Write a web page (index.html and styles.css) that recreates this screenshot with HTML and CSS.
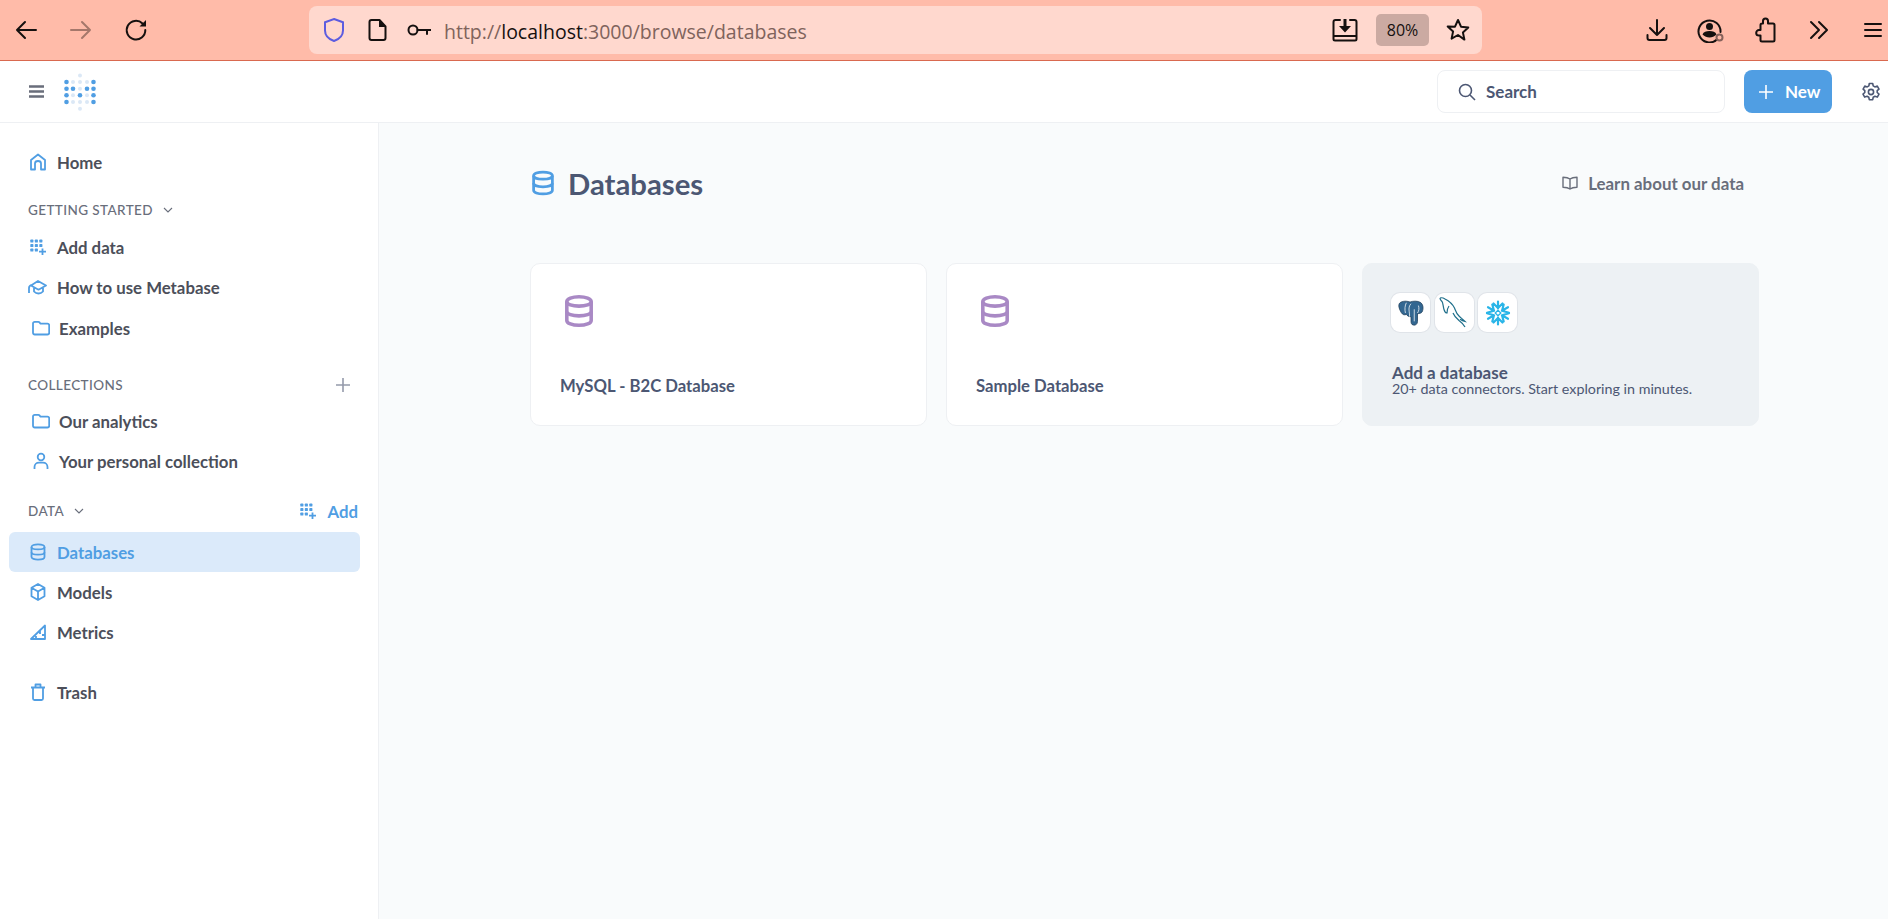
FILE: index.html
```html
<!DOCTYPE html>
<html lang="en">
<head>
    <meta charset="UTF-8">
    <meta name="viewport" content="width=device-width, initial-scale=1.0">
    <title>Databases</title>
    <link rel="stylesheet" href="styles.css">
</head>
<body>

<svg class="sprites" aria-hidden="true">
    <symbol id="i-db" viewBox="0 0 16 18">
        <path d="M1.500 4c0-1.500 2.900-2.600 6.500-2.600s6.500 1.100 6.500 2.600v10c0 1.500-2.900 2.600-6.500 2.600s-6.500-1.100-6.500-2.600z"/>
        <path d="M1.500 4c0 1.400 2.900 2.400 6.500 2.400s6.500-1 6.500-2.400M1.500 9.200c0 1.400 2.900 2.400 6.500 2.400s6.500-1 6.500-2.400"/>
    </symbol>
    <symbol id="i-folder" viewBox="0 0 18 16">
        <path d="M1 3.500c0-1 .7-1.700 1.700-1.700h3.600c.5 0 .9.200 1.200.6l1 1.300h7c1 0 1.700.7 1.700 1.700v7.400c0 1-.7 1.700-1.700 1.700H2.700c-1 0-1.700-.7-1.700-1.700z"/>
    </symbol>
    <symbol id="i-add" viewBox="0 0 16 16">
        <g fill="#509ee3" stroke="none">
            <rect x="0.300" y="0.500" width="3.100" height="3.100" rx=".7"/><rect x="4.800" y="0.500" width="3.100" height="3.100" rx=".7"/><rect x="9.300" y="0.500" width="3.100" height="3.100" rx=".7"/>
            <rect x="0.300" y="5" width="3.100" height="3.100" rx=".7"/><rect x="4.800" y="5" width="3.100" height="3.100" rx=".7"/><rect x="9.300" y="5" width="3.100" height="3.100" rx=".7"/>
            <rect x="0.300" y="9.500" width="3.100" height="3.100" rx=".7"/><rect x="4.800" y="9.500" width="3.100" height="3.100" rx=".7"/>
        </g>
        <path d="M12.500 9.500v6.500M9 12.700h7"/>
    </symbol>
</svg>

<div class="browser-bar">
    <div class="nav-buttons">
        <svg class="bicon" width="24" height="24" viewBox="0 0 24 24"><path d="M22 12H3M11 4l-8 8 8 8"/></svg>
        <svg class="bicon dim" width="24" height="24" viewBox="0 0 24 24"><path d="M2 12h19M13 4l8 8-8 8"/></svg>
        <svg class="bicon" width="24" height="24" viewBox="0 0 24 24"><path d="M18.500 5.500A9.300 9.300 0 1 0 21.300 12"/><path class="solid" d="M15.500 8.500h6.500V2z"/></svg>
    </div>
    <div class="url-box">
        <svg class="shield" width="24" height="26" viewBox="0 0 24 26"><path d="M12 2l9 3.200v8.300c0 5-3.800 8.700-9 10.500-5.200-1.800-9-5.500-9-10.500V5.200z"/></svg>
        <svg class="bicon" width="20" height="24" viewBox="0 0 20 24"><path d="M3.500 2h8l6 6.500V20c0 1.200-.8 2-2 2h-12c-1.200 0-2-.8-2-2V4c0-1.200.8-2 2-2z"/><path class="solid" d="M11 2l6.500 7H11z"/></svg>
        <svg class="bicon key" width="24" height="16" viewBox="0 0 24 16"><circle cx="6" cy="8" r="4.500"/><path d="M10.500 8H23.500M20 8v4"/></svg>
        <div class="url-text">http://<b>localhost</b>:3000/browse/databases</div>
        <svg class="bicon" width="26" height="24" viewBox="0 0 26 24"><path d="M8 2H3.500C2.300 2 1.500 2.800 1.500 4v17c0 .8.700 1.500 1.500 1.500h20c.8 0 1.500-.7 1.500-1.500V4c0-1.200-.8-2-2-2H18M1.500 18h23"/><path class="solid" d="M11.500 1h3v7H19l-6 6.500L7 8h4.500z"/></svg>
        <div class="zoom-badge">80%</div>
        <svg class="bicon star" width="24" height="24" viewBox="0 0 24 24"><path d="M12 2l3 6.700 7.300.8-5.400 4.900 1.500 7.200L12 17l-6.400 3.600 1.500-7.200-5.400-4.900L9 8.700z"/></svg>
    </div>
    <div class="tool-buttons">
        <svg class="bicon" width="22" height="24" viewBox="0 0 22 24"><path d="M11 2v15M4 10l7 7 7-7M1.500 17v3c0 1.300.8 2 2 2h15c1.200 0 2-.7 2-2v-3"/></svg>
        <svg class="bicon" width="28" height="26" viewBox="0 0 28 26"><path d="M20 22.500A11 11 0 1 1 23.500 15"/><circle class="solid" cx="12.500" cy="9.500" r="3.500"/><path class="solid" d="M5.500 17.500c1-2.800 3.700-3.500 7-3.500s6 .7 7 3.500c-2 2-4.500 3-7 3s-5-1-7-3z"/><circle class="ring" cx="22.500" cy="20.500" r="3"/></svg>
        <svg class="bicon" width="22" height="26" viewBox="0 0 22 26"><path d="M9 4c0-1.500 1-2.500 2.500-2.500S14 2.500 14 4v2.500h5c.8 0 1.500.7 1.500 1.500v15c0 .8-.7 1.500-1.500 1.500H8c-.8 0-1.500-.7-1.500-1.500v-4.500H5c-1.500 0-2.800-1-2.800-2.500S3.500 13 5 13h1.500V8c0-.8.700-1.500 1.500-1.500h1z"/></svg>
        <svg class="bicon" width="20" height="20" viewBox="0 0 20 20"><path d="M2 2l8 8-8 8M10 2l8 8-8 8"/></svg>
        <svg class="bicon" width="18" height="18" viewBox="0 0 18 18"><path d="M1 3h16M1 9h16M1 15h16"/></svg>
    </div>
</div>

<header class="app-header">
    <div class="header-left">
        <svg class="burger" width="15" height="13" viewBox="0 0 15 13"><path d="M0 1.500h15M0 6.500h15M0 11.500h15"/></svg>
        <svg class="logo" width="34" height="38" viewBox="0 0 34 38">
            <g class="logo-light">
                <circle cx="17" cy="2.500" r="2"/><circle cx="10" cy="9" r="2"/><circle cx="17" cy="9" r="2"/><circle cx="24" cy="9" r="2"/>
                <circle cx="17" cy="15.700" r="2"/><circle cx="10" cy="22.300" r="2"/><circle cx="24" cy="22.300" r="2"/>
                <circle cx="10" cy="29" r="2"/><circle cx="17" cy="29" r="2"/><circle cx="24" cy="29" r="2"/><circle cx="17" cy="35.700" r="2"/>
            </g>
            <g class="logo-dark">
                <circle cx="3.500" cy="9" r="2.300"/><circle cx="30.500" cy="9" r="2.300"/>
                <circle cx="3.500" cy="15.700" r="2.300"/><circle cx="10" cy="15.700" r="2.300"/><circle cx="24" cy="15.700" r="2.300"/><circle cx="30.500" cy="15.700" r="2.300"/>
                <circle cx="3.500" cy="22.300" r="2.300"/><circle cx="17" cy="22.300" r="2.300"/><circle cx="30.500" cy="22.300" r="2.300"/>
                <circle cx="3.500" cy="29" r="2.300"/><circle cx="30.500" cy="29" r="2.300"/>
            </g>
        </svg>
    </div>
    <div class="header-right">
        <div class="search-box">
            <svg width="18" height="18" viewBox="0 0 18 18"><circle cx="7.500" cy="7.500" r="6"/><path d="M12 12l5 5"/></svg>
            <span>Search</span>
        </div>
        <button class="new-btn">
            <svg width="16" height="16" viewBox="0 0 16 16"><path d="M8 1v14M1 8h14"/></svg>
            New
        </button>
        <svg class="gear" width="20" height="20" viewBox="0 0 20 20"><path d="M8.300 1.500h3.400l.5 2.400 1.700 1 2.400-.8 1.700 3-1.800 1.600v1.800l1.800 1.600-1.700 3-2.400-.8-1.700 1-.5 2.400H8.300l-.5-2.400-1.700-1-2.400.8-1.700-3 1.800-1.600V8.700L2.100 7.100l1.700-3 2.400.8 1.700-1z"/><circle cx="10" cy="10" r="2.600"/></svg>
    </div>
</header>

<div class="layout">
    <nav class="sidebar">
        <a class="nav-item">
            <svg class="nav-icon" width="16" height="18" viewBox="0 0 16 18"><path d="M1 16.500V7l7-5.500L15 7v9.500h-4v-6c0-1.500-1.200-2.500-3-2.500s-3 1-3 2.500v6z"/></svg>
            Home
        </a>

        <div class="section-head first">
            <span class="section-title">Getting started</span>
            <svg class="chevron" width="10" height="6" viewBox="0 0 10 6"><path d="M1 1l4 4 4-4"/></svg>
        </div>
        <a class="nav-item">
            <svg class="nav-icon" width="16" height="16"><use href="#i-add"/></svg>
            Add data
        </a>
        <a class="nav-item">
            <svg class="nav-icon wide" width="19" height="16" viewBox="0 0 19 16"><path d="M3 6.500l7-4.500 8 4.500-7.500 4.200zM6 9v3.500c1.200 1.300 2.700 2 4.500 2s3.300-.7 4.500-2V9M1 14V9c0-1.700 1-2.800 3-3.200"/></svg>
            How to use Metabase
        </a>
        <a class="nav-item shifted examples">
            <svg class="nav-icon" width="18" height="16"><use href="#i-folder"/></svg>
            Examples
        </a>

        <div class="section-head collections-head">
            <span class="section-title">Collections</span>
            <svg class="plus" width="14" height="14" viewBox="0 0 14 14"><path d="M7 0v14M0 7h14"/></svg>
        </div>
        <a class="nav-item shifted">
            <svg class="nav-icon" width="18" height="16"><use href="#i-folder"/></svg>
            Our analytics
        </a>
        <a class="nav-item shifted">
            <svg class="nav-icon" width="18" height="18" viewBox="0 0 18 18"><circle cx="9" cy="5" r="3.300"/><path d="M2.500 17v-2c0-2.600 2-4.300 4.500-4.300h4c2.500 0 4.500 1.700 4.500 4.300v2"/></svg>
            Your personal collection
        </a>

        <div class="section-head data-head">
            <span class="section-title">Data</span>
            <svg class="chevron" width="10" height="6" viewBox="0 0 10 6"><path d="M1 1l4 4 4-4"/></svg>
            <span class="add-link">
                <svg class="nav-icon" width="16" height="16"><use href="#i-add"/></svg>
                Add
            </span>
        </div>
        <a class="nav-item active">
            <svg class="nav-icon" width="16" height="18"><use href="#i-db"/></svg>
            Databases
        </a>
        <a class="nav-item">
            <svg class="nav-icon" width="16" height="18" viewBox="0 0 16 18"><path d="M8 1l6.500 3.700v8.600L8 17l-6.500-3.700V4.700zM1.500 4.700L8 8.600l6.500-3.900M8 8.600V17"/></svg>
            Models
        </a>
        <a class="nav-item">
            <svg class="nav-icon" width="16" height="16" viewBox="0 0 16 16"><path d="M1 15L15 1.500V15zM10 7v3M6 15v-3M15 11h-3"/></svg>
            Metrics
        </a>
        <a class="nav-item trash">
            <svg class="nav-icon" width="16" height="18" viewBox="0 0 16 18"><path d="M1 4.500h14M5.500 4V1.500h5V4M3 4.500v11c0 .8.700 1.500 1.500 1.500h7c.8 0 1.500-.7 1.500-1.500v-11"/></svg>
            Trash
        </a>
    </nav>

    <main class="content">
        <div class="page-head">
            <h1>
                <svg class="title-icon" width="24" height="26"><use href="#i-db"/></svg>
                Databases
            </h1>
            <a class="learn-link">
                <svg width="16" height="14" viewBox="0 0 16 14"><path d="M8 3C6.500 1.800 4.500 1.200 1 1.200v10c3.500 0 5.500.6 7 1.800 1.500-1.200 3.500-1.800 7-1.800v-10C11.500 1.200 9.500 1.800 8 3zM8 3v10"/></svg>
                Learn about our data
            </a>
        </div>

        <div class="card-grid">
            <div class="db-card">
                <svg class="card-icon" width="30" height="34"><use href="#i-db"/></svg>
                <div class="card-title">MySQL - B2C Database</div>
            </div>
            <div class="db-card">
                <svg class="card-icon" width="30" height="34"><use href="#i-db"/></svg>
                <div class="card-title">Sample Database</div>
            </div>
            <div class="db-card add-card">
                <div class="engine-row">
                    <div class="engine">
                        <svg width="26" height="26" viewBox="0 0 28 28">
                            <path class="pg-body" d="M4 2C7 .8 10 1.200 13 2.200 16 1 21 .8 24 2.500c3 2 3.500 6 2.500 9-.5 2-2 3-4 3L21 15v8c0 3-2 4.500-4.500 4-2-.5-2.500-2-2.500-4.500V18c-2.500 0-4-1-5-2.500-2 1-4 .5-5.500-2C1.500 10 .5 7 1 5c.3-1.500 1.500-2.500 3-3z"/>
                            <path class="pg-line" d="M9 3C7.500 6 7 10 8 14M14 4c-2 2-2.500 5-2 8 .3 2 .5 4 .5 6M17.500 10v13M22 6c1 3 .5 6-1 8"/>
                        </svg>
                    </div>
                    <div class="engine">
                        <svg width="32" height="34" viewBox="0 0 32 34">
                            <path class="my-line" d="M2 2c1.500-.5 3.500 0 5 1 4 2 7.500 5 9.500 9 1 2.500 1.800 5.500 4.500 8 1.500 1.500 4 3.500 6 5.500-2-.5-3.500-1.300-5-2.300M2 2c0 2 1 2.500 2 3.500s1 4.500 2 8c.6 2 2 3.500 3 3.500 0-2 .5-5 2-7M15 17c1 2.500 3 5 6 7.500 2 1.500 4.500 3.500 6 6.500"/>
                        </svg>
                    </div>
                    <div class="engine">
                        <svg width="26" height="26" viewBox="0 0 26 26">
                            <path class="snow" d="M13 1.500v7M8.500 3.500L13 8l4.500-4.500M13 24.500v-7M8.500 22.500L13 18l4.500 4.500M3 7.200l6.100 3.500M2 12.700L9 10.700 7.300 4.500M23 7.200l-6.100 3.500M24 12.700l-7-2 1.700-6.200M3 18.800l6.100-3.500M2 13.300l7 2-1.700 6.200M23 18.800l-6.100-3.500M24 13.300l-7 2 1.700 6.200"/>
                            <path class="snow-core" d="M13 10.200l2.800 2.800-2.800 2.800-2.800-2.800z"/>
                        </svg>
                    </div>
                </div>
                <div class="add-title">Add a database</div>
                <div class="add-sub">20+ data connectors. Start exploring in minutes.</div>
            </div>
        </div>
    </main>
</div>

</body>
</html>
```

FILE: styles.css
```css
* {
    box-sizing: border-box;
}
html, body {
    height: 100%;
}
body {
    margin: 0;
    font-family: 'Lato', sans-serif;
    background-color: #fff;
    overflow: hidden;
    display: flex;
    flex-direction: column;
}
svg {
    flex: none;
    display: block;
}
.sprites {
    display: none;
}

/* browser toolbar */
.browser-bar {
    height: 61px;
    flex: none;
    display: flex;
    align-items: center;
    background-color: #ffbba9;
    border-bottom: 1px solid #d9694f;
    padding-bottom: 1px;
}
.nav-buttons {
    flex: none;
    width: 309px;
    padding-left: 14px;
    display: flex;
    align-items: center;
    gap: 31px;
}
.bicon {
    fill: none;
    stroke: #15100f;
    stroke-width: 2;
    stroke-linecap: round;
    stroke-linejoin: round;
}
.bicon .solid {
    fill: #15100f;
    stroke: none;
}
.bicon .ring {
    fill: #ffbba9;
    stroke: #86615a;
}
.bicon.dim {
    stroke: #a5776b;
}
.url-box {
    flex: none;
    width: 1173px;
    height: 48px;
    background-color: #ffd8ce;
    border-radius: 8px;
    display: flex;
    align-items: center;
    padding-left: 13px;
    padding-right: 12px;
}
.shield {
    fill: none;
    stroke: #5c5ce0;
    stroke-width: 2;
    margin-right: 22px;
}
.bicon.key {
    margin-left: 19px;
}
.url-text {
    margin-left: 13px;
    padding-top: 4px;
    flex: 1;
    font-family: 'Open Sans', sans-serif;
    font-size: 19.500px;
    color: #80635c;
}
.url-text b {
    font-weight: 400;
    color: #15100f;
}
.zoom-badge {
    width: 53px;
    height: 32px;
    margin-left: 18px;
    margin-right: 17px;
    background-color: #cbaaa2;
    border-radius: 5px;
    font-family: 'Open Sans', sans-serif;
    font-size: 16px;
    line-height: 32px;
    text-align: center;
    color: #15100f;
}
.tool-buttons {
    flex: none;
    margin-left: 148px;
    display: grid;
    grid-auto-flow: column;
    grid-auto-columns: 54px;
    align-items: center;
    justify-items: center;
}

/* app header */
.app-header {
    height: 62px;
    flex: none;
    display: flex;
    align-items: center;
    justify-content: space-between;
    background-color: #fff;
    border-bottom: 1px solid #eef0f3;
    padding: 0 7px 0 29px;
}
.header-left {
    display: flex;
    align-items: center;
    gap: 19px;
}
.burger {
    fill: none;
    stroke: #696e7b;
    stroke-width: 2.400;
}
.logo-light {
    fill: #dbe8f6;
}
.logo-dark {
    fill: #509ee3;
}
.header-right {
    display: flex;
    align-items: center;
}
.search-box {
    width: 288px;
    height: 43px;
    display: flex;
    align-items: center;
    gap: 10px;
    padding-left: 20px;
    border: 1px solid #eef0f3;
    border-radius: 8px;
    background: #fff;
    font-size: 17px;
    font-weight: 700;
    color: #4c5773;
}
.search-box svg {
    fill: none;
    stroke: #4c5773;
    stroke-width: 1.600;
}
.new-btn {
    width: 88px;
    height: 43px;
    margin-left: 19px;
    margin-right: 29px;
    display: flex;
    align-items: center;
    gap: 11px;
    padding: 0 0 0 14px;
    border: none;
    border-radius: 8px;
    background-color: #509ee3;
    color: white;
    font-family: inherit;
    font-size: 17px;
    font-weight: 700;
}
.new-btn svg {
    fill: none;
    stroke: white;
    stroke-width: 1.600;
}
.gear {
    fill: none;
    stroke: #4c5773;
    stroke-width: 1.600;
    stroke-linejoin: round;
}

/* layout */
.layout {
    flex: 1;
    display: flex;
    min-height: 0;
}
.sidebar {
    width: 379px;
    flex: none;
    padding: 19px 18px 0 9px;
    background-color: #fff;
    border-right: 1px solid #eef0f3;
}
.nav-item {
    height: 40px;
    display: flex;
    align-items: center;
    gap: 11px;
    padding-left: 21px;
    border-radius: 6px;
    font-size: 16.800px;
    font-weight: 700;
    color: #4c4f5a;
}
.nav-icon {
    fill: none;
    stroke: #509ee3;
    stroke-width: 1.800;
    stroke-linejoin: round;
}
.nav-icon.wide {
    margin-left: -2px;
    margin-right: -1px;
}
.nav-item.shifted {
    padding-left: 23px;
    gap: 9px;
}
.nav-item.examples {
    margin-top: 1px;
}
.nav-item.active {
    background-color: #dbeafa;
    color: #509ee3;
}
.nav-item.trash {
    margin-top: 20px;
}
.section-head {
    height: 30px;
    display: flex;
    align-items: center;
    gap: 10px;
    padding-left: 19px;
    font-size: 13.500px;
    color: #696e7b;
}
.section-head.first {
    margin-top: 13px;
    margin-bottom: 2px;
}
.collections-head {
    margin-top: 22px;
    margin-bottom: 1px;
}
.section-title {
    text-transform: uppercase;
    letter-spacing: 0.4px;
    font-weight: 500;
}
.section-head .plus {
    margin-left: auto;
    margin-right: 10px;
    fill: none;
    stroke: #949aab;
    stroke-width: 1.600;
}
.chevron {
    fill: none;
    stroke: #696e7b;
    stroke-width: 1.100;
}
.data-head {
    margin-top: 15px;
    margin-bottom: 6px;
}
.add-link {
    margin-left: auto;
    display: flex;
    align-items: center;
    gap: 11px;
    font-size: 16.800px;
    font-weight: 700;
    color: #509ee3;
    padding-right: 2px;
}

/* main content */
.content {
    flex: 1;
    padding: 40px 129px 0 151px;
    background-color: #f9fbfc;
}
.page-head {
    height: 40px;
    display: flex;
    align-items: center;
    justify-content: space-between;
    padding-right: 15px;
}
h1 {
    margin: 0;
    display: flex;
    align-items: center;
    gap: 13px;
    font-size: 29.300px;
    font-weight: 700;
    color: #4c5773;
}
.title-icon {
    margin-left: 1px;
    fill: none;
    stroke: #509ee3;
    stroke-width: 1.900;
}
.learn-link {
    display: flex;
    align-items: center;
    gap: 10px;
    font-size: 16.900px;
    font-weight: 700;
    color: #696e7b;
}
.learn-link svg {
    fill: none;
    stroke: #696e7b;
    stroke-width: 1.400;
    stroke-linejoin: round;
}
.card-grid {
    margin-top: 60px;
    display: grid;
    grid-template-columns: repeat(3, 397px);
    gap: 19px;
}
.db-card {
    height: 163px;
    padding: 30px 29px 0;
    background: white;
    border: 1px solid #eef0f3;
    border-radius: 10px;
}
.card-icon {
    margin-left: 4px;
    fill: none;
    stroke: #a989c5;
    stroke-width: 1.900;
}
.card-title {
    margin-top: 48px;
    font-size: 16.700px;
    font-weight: 700;
    color: #4c5773;
}
.add-card {
    background-color: #edf1f4;
    border-color: #edf1f4;
    border-radius: 10px;
}
.engine-row {
    display: flex;
    gap: 4.500px;
    margin-top: -1px;
    margin-left: -1px;
}
.engine {
    width: 39px;
    height: 39px;
    display: flex;
    align-items: center;
    justify-content: center;
    background: white;
    border-radius: 9px;
    box-shadow: 0 0 0 1px #e0e4e9;
}
.pg-body {
    fill: #336791;
    stroke: #1d3c57;
    stroke-width: .8;
}
.pg-line {
    fill: none;
    stroke: #fff;
    stroke-width: .8;
}
.my-line {
    fill: none;
    stroke: #1f6f8b;
    stroke-width: 1.200;
}
.snow {
    fill: none;
    stroke: #29b5e8;
    stroke-width: 2.200;
    stroke-linecap: round;
    stroke-linejoin: round;
}
.snow-core {
    fill: none;
    stroke: #29b5e8;
    stroke-width: 1.300;
}
.add-title {
    margin-top: 32px;
    font-size: 17px;
    line-height: 17px;
    font-weight: 700;
    color: #4c5773;
}
.add-sub {
    font-size: 14.300px;
    line-height: 16px;
    color: #4c5773;
}
```
